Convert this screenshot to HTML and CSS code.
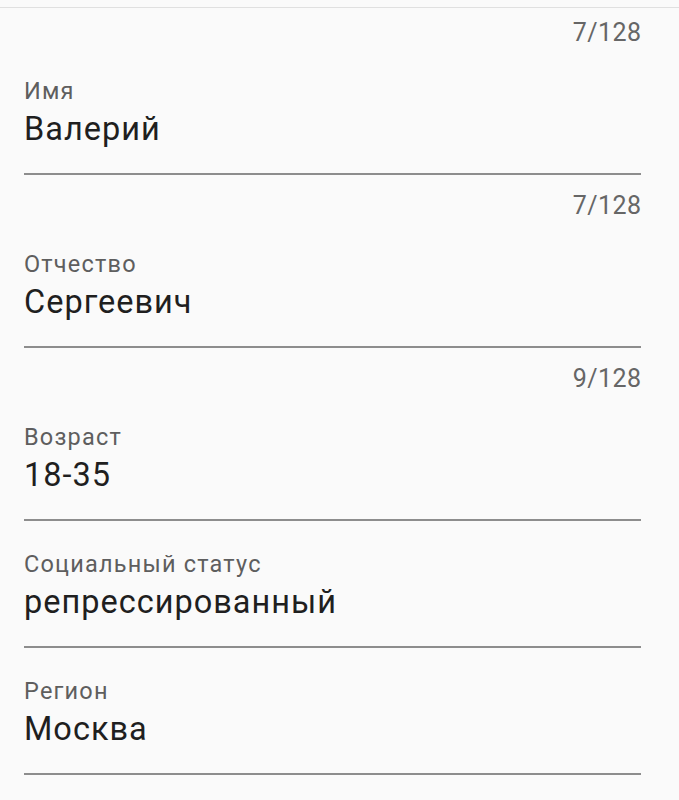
FILE: index.html
```html
<!DOCTYPE html>
<html lang="ru">
<head>
<meta charset="utf-8">
<title>Форма</title>
<link rel="stylesheet" href="styles.css">
</head>
<body>
<div class="topbar"></div>
<form class="form">
  <div class="field">
    <div class="counter">7/128</div>
    <div class="label">Имя</div>
    <div class="value">Валерий</div>
    <div class="underline"></div>
  </div>
  <div class="field">
    <div class="counter">7/128</div>
    <div class="label">Отчество</div>
    <div class="value">Сергеевич</div>
    <div class="underline"></div>
  </div>
  <div class="field">
    <div class="counter">9/128</div>
    <div class="label">Возраст</div>
    <div class="value">18-35</div>
    <div class="underline"></div>
  </div>
  <div class="field">
    <div class="label">Социальный статус</div>
    <div class="value">репрессированный</div>
    <div class="underline"></div>
  </div>
  <div class="field">
    <div class="label">Регион</div>
    <div class="value">Москва</div>
    <div class="underline"></div>
  </div>
</form>
</body>
</html>
```

FILE: styles.css
```css
html, body {
  margin: 0;
  padding: 0;
  background: #fafafa;
}
body {
  font-family: Roboto, "Noto Sans", sans-serif;
  width: 679px;
  height: 800px;
  overflow: hidden;
}
.topbar {
  height: 7px;
  border-bottom: 1px solid #e0e0e0;
}
.form {
  padding: 0 38px 0 24px;
  margin: 0;
}
.field {
  display: flex;
  flex-direction: column;
}
.counter {
  margin-top: 16px;
  margin-right: -0.4px;
  height: 30px;
  line-height: 30px;
  font-size: 25px;
  letter-spacing: 0.4px;
  color: #666666;
  text-align: right;
}
.field:first-child .counter {
  margin-top: 10px;
}
.label {
  margin-top: 28px;
  height: 30px;
  line-height: 30px;
  font-size: 23.5px;
  letter-spacing: 1.2px;
  color: #5e5e5e;
}
.value {
  margin-top: 3px;
  height: 40px;
  line-height: 40px;
  font-size: 32.5px;
  letter-spacing: 1px;
  color: #1f1f1f;
}
.underline {
  margin-top: 24px;
  height: 2px;
  background: #8d8d8d;
}
```
